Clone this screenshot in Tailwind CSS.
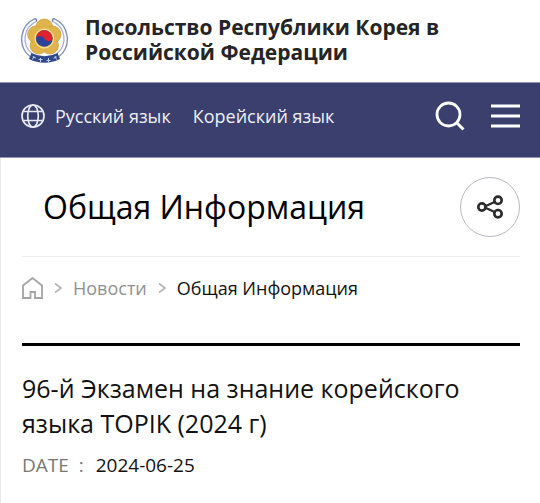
<!DOCTYPE html>
<html lang="ru">
<head>
<meta charset="utf-8">
<meta name="viewport" content="width=device-width, initial-scale=1">
<title>Общая Информация</title>
<script src="https://cdn.jsdelivr.net/npm/@tailwindcss/browser@4"></script>
</head>
<body class="min-h-screen bg-white font-['Open_Sans','Noto_Sans',sans-serif] text-black flex flex-col">
<header>
  <div class="flex items-start gap-4 px-5 pt-[15px] pb-[17px]">
    <a href="#" aria-label="Главная страница" class="shrink-0">
      <svg class="w-[49px] h-[50px]" viewBox="0 0 49 50" fill="none">
        <path d="M15.500 3.300A22.500 22.500 0 0 0 10 41.500M33.500 3.300A22.500 22.500 0 0 1 39 41.500" stroke="#8294bd" stroke-width="1.400"/>
        <path d="M16.500 6.300A19 19 0 0 0 12 38.500M32.500 6.300A19 19 0 0 1 37 38.500" stroke="#a3b1d0" stroke-width="1.300"/>
        <path d="M15.500 3.300l1.500 3.200M33.500 3.300l-1.500 3.200" stroke="#6478ab" stroke-width="1.400"/>
        <g fill="#e0b44a" stroke="#c99a35" stroke-width=".7">
          <circle cx="24.300" cy="12.500" r="8.500"/>
          <circle cx="32.500" cy="19.500" r="8.500"/>
          <circle cx="30" cy="30.500" r="8.500"/>
          <circle cx="18.600" cy="30.500" r="8.500"/>
          <circle cx="16.100" cy="19.500" r="8.500"/>
        </g>
        <circle cx="24.300" cy="23" r="12" fill="#e0b44a"/>
        <circle cx="24.300" cy="23.500" r="9.300" stroke="#f3df9c" stroke-width="1.200"/>
        <circle cx="24.300" cy="23.500" r="8.300" fill="#2b4398"/>
        <path d="M16 23.500a8.300 8.300 0 0 1 16.600 0c-1 3.200-5.500 3.800-8.300 0-2.300-3.200-7-3.200-8.300 0z" fill="#df2230"/>
        <path d="M11.500 38Q24.500 44.500 37.500 38L40 44Q24.500 51.500 9 44Z" fill="#31498c"/>
        <path d="M14 41l-1.500 3.500M12.800 41.800l3 1.200M20.500 43v4M18.500 44.500h4M28.500 43v4M26.500 45.500h4M35 41l1.500 3.500M33.500 43.200l3-1.200" stroke="#c3cde6" stroke-width="1"/>
      </svg>
    </a>
    <p class="text-[21px] leading-[25px] font-bold text-[#252525]">Посольство Республики Корея в Российской Федерации</p>
  </div>
  <nav class="flex h-[76px] items-center border-y border-[#9295af] bg-[#3a3f6e] pr-5 pl-[21px] pb-2" aria-label="Меню">
    <svg class="size-6 shrink-0" viewBox="0 0 24 24" fill="none" stroke="#e9eaf3" stroke-width="1.700">
      <circle cx="12" cy="12" r="11"/>
      <ellipse cx="12" cy="12" rx="5.300" ry="11"/>
      <path d="M2.500 7.500h19M2.500 16.500h19" stroke-width="1.500"/>
    </svg>
    <div class="ml-[10px] flex gap-[22px] text-[18px] leading-6 text-[#eeeff6]">
      <a href="#">Русский язык</a>
      <a href="#">Корейский язык</a>
    </div>
    <div class="ml-auto flex items-center gap-[26px]">
      <button type="button" aria-label="Поиск" class="block">
        <svg class="size-[30px]" viewBox="0 0 30 30" fill="none" stroke="#fff" stroke-width="2.800"><circle cx="13.500" cy="13.500" r="11.500"/><path d="M21.500 21.500l7 7" stroke-width="3"/></svg>
      </button>
      <button type="button" aria-label="Открыть меню" class="block">
        <svg class="w-[29px] h-6" viewBox="0 0 29 24" stroke="#fff" stroke-width="2.800"><path d="M0 2h29M0 12h29M0 22h29"/></svg>
      </button>
    </div>
  </nav>
</header>
<main class="grow border-l border-[#e8e8e8] pl-[21px] pr-5">
  <div class="flex h-[99px] items-center justify-between border-b border-[#efefef] pl-[21px]">
    <h1 class="text-[32px] leading-10">Общая Информация</h1>
    <button type="button" aria-label="Поделиться" class="flex size-[60px] items-center justify-center rounded-full border border-[#b9b9c4]">
      <svg class="w-[26px] h-6" viewBox="0 0 26 24" fill="none" stroke="#2b2b2b" stroke-width="2.600"><circle cx="4.900" cy="12" r="3.600"/><circle cx="21" cy="5.300" r="3.700"/><circle cx="21" cy="18.700" r="3.700"/><path d="M8.300 11.200l9.300-4.200M8.300 12.800l9.300 4.200" stroke-width="2.200"/></svg>
    </button>
  </div>
  <nav class="flex h-[86px] items-center pb-6 text-[18px] leading-6" aria-label="Навигационная цепочка">
    <a href="#" aria-label="Главная" class="shrink-0">
      <svg class="w-[21px] h-[22px]" viewBox="0 0 21 22" fill="none" stroke="#a5a5a5" stroke-width="1.800"><path d="M1 21V8.500L10.500 1 20 8.500V21h-7v-6H8.500v6z"/></svg>
    </a>
    <svg class="mx-[11px] w-2 h-3 shrink-0" viewBox="0 0 8 12" fill="none" stroke="#b5b5b5" stroke-width="1.600"><path d="M1 1.500L7 6l-6 4.500"/></svg>
    <a href="#" class="text-[#919191]">Новости</a>
    <svg class="mx-[11px] w-2 h-3 shrink-0" viewBox="0 0 8 12" fill="none" stroke="#b5b5b5" stroke-width="1.600"><path d="M1 1.500L7 6l-6 4.500"/></svg>
    <span class="text-[#111]" aria-current="page">Общая Информация</span>
  </nav>
  <article class="border-t-3 border-black pt-[25px] pb-6">
    <h2 class="text-[25px] leading-[35px] text-[#111]">96-й Экзамен на знание корейского языка TOPIK (2024 г)</h2>
    <dl class="mt-3 flex text-[19px] leading-6">
      <dt class="text-[#777]">DATE&nbsp; :</dt>
      <dd class="ml-3 text-[#111]">2024-06-25</dd>
    </dl>
  </article>
</main>
</body>
</html>
